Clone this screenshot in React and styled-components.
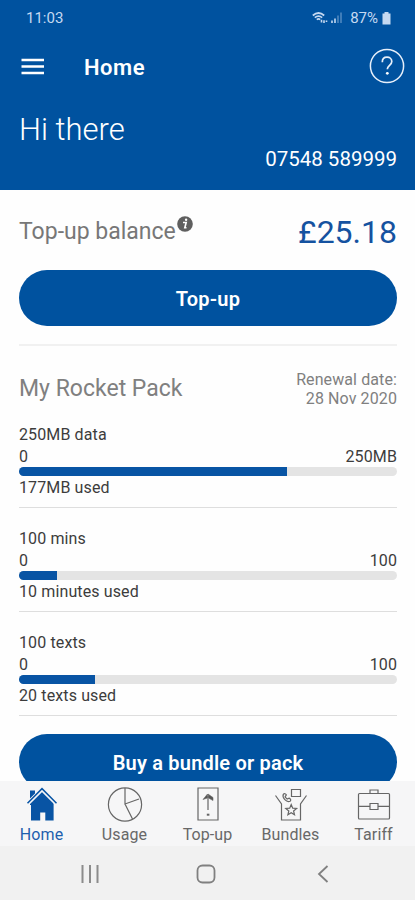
import React from "react";
import styled, { createGlobalStyle } from "styled-components";

const allowances = [
  { title: "250MB data", total: "250MB", used: 177, max: 250, label: "177MB used" },
  { title: "100 mins", total: "100", used: 10, max: 100, label: "10 minutes used" },
  { title: "100 texts", total: "100", used: 20, max: 100, label: "20 texts used" },
];

const HomeIcon = () => (
  <svg width="32" height="36" viewBox="0 0 32 36">
    <path d="M4 19V4.5h5V9l7-6.2 11.6 12V34.5h-8.3v-8h-5.1v8H5V19z" fill="#0854a4" />
    <path d="M1.6 17.6 16 3.4l14.4 14.2" fill="none" stroke="#f6f6f7" strokeWidth="4" />
    <path d="M1.5 17.2 16 2.6l14.5 14.6" fill="none" stroke="#0854a4" strokeWidth="1.5" />
  </svg>
);

const UsageIcon = () => (
  <Line width="36" height="36" viewBox="0 0 36 36">
    <circle cx="18" cy="18.5" r="16.6" />
    <path d="M18 2v16l14-5M18 18l7.5 15" />
  </Line>
);

const TopUpIcon = () => (
  <Line width="22" height="36" viewBox="0 0 22 36">
    <path d="M1 2h20v32H1z" />
    <path d="M11 24V10" />
    <path d="M6 13.5 10.5 8v4zM11 8l5 3.5v3L11.5 12z" fill="#555" strokeWidth="0.6" />
    <path d="M9.8 28.7h2.6" strokeWidth="2" />
  </Line>
);

const BundlesIcon = () => (
  <Line width="34" height="36" viewBox="0 0 34 36">
    <path d="m1.5 9.5 6 8.5v16h19V18l6-8.5" />
    <path d="M17.5 3.5h9v7h-9z" />
    <path d="M9.3 8.3c1-1.2 2.4-.4 3 .6l-1.2 2 2 2.2 2-1c1.4.6 2.3 2 1 3.2-3.6 1.6-8.2-3.5-6.8-7z" />
    <path d="m17.2 18.6 1.5 3.6 3.9.3-3 2.5.9 3.8-3.3-2-3.3 2 .9-3.8-3-2.5 3.9-.3z" />
  </Line>
);

const TariffIcon = () => (
  <Line width="34" height="36" viewBox="0 0 34 36">
    <rect x="1.5" y="7.5" width="31" height="25.5" rx="1" />
    <path d="M13 7.5V4h8v3.5M1.5 20.3H13M21 20.3h11.5M13 17.5h8v6h-8z" />
  </Line>
);

const tabs = [
  { name: "Home", icon: HomeIcon, active: true },
  { name: "Usage", icon: UsageIcon },
  { name: "Top-up", icon: TopUpIcon },
  { name: "Bundles", icon: BundlesIcon },
  { name: "Tariff", icon: TariffIcon },
];

const Allowance = ({ item }) => (
  <AllowanceBlock>
    <AllowanceTitle>{item.title}</AllowanceTitle>
    <Range>
      <span>0</span>
      <span>{item.total}</span>
    </Range>
    <Track>
      <Fill style={{ width: `${(item.used / item.max) * 100}%` }} />
    </Track>
    <Used>{item.label}</Used>
  </AllowanceBlock>
);

const App = () => {
  return (
    <Screen>
      <GlobalStyle />
      <Header>
        <StatusBar>
          <span>11:03</span>
          <StatusIcons>
            <svg width="30" height="14" viewBox="0 0 30 14" fill="none" stroke="currentColor">
              <path d="M.8 4.5Q6.5-.5 12.2 4.5M2.8 6.6q3.7-3 7.4 0M4.8 8.6q1.7-1.4 3.4 0" strokeWidth="1.7" />
              <path d="M9.5 11.5V8.8M12 12V9.3M14.5 9.5V11" strokeWidth="1.6" />
              <path d="M20 12V9.5M23 12V7.5" strokeWidth="1.6" />
              <path d="M26 12V4.5M29 12V1.5" strokeWidth="1.4" opacity=".45" />
            </svg>
            <Battery>87%</Battery>
            <svg width="9" height="13" viewBox="0 0 9 13" fill="currentColor">
              <path d="M2.5 0h4v1.500h2v11h-8v-11h2z" />
            </svg>
          </StatusIcons>
        </StatusBar>
        <TitleBar>
          <svg width="23" height="17" viewBox="0 0 23 17" stroke="#fff" strokeWidth="2.4">
            <path d="M.5 2H23M.5 8.500H23M.5 15H23" />
          </svg>
          <PageTitle>Home</PageTitle>
          <svg width="36" height="36" viewBox="0 0 36 36" fill="none" stroke="#e6effa" strokeWidth="1.5">
            <circle cx="18" cy="18" r="16.6" />
            <path d="M13.3 14.2c0-3.2 2-5 4.7-5s4.8 1.8 4.8 4.3c0 3.8-4.5 4-4.5 7.8" strokeWidth="1.7" />
            <circle cx="18.3" cy="25.3" r="1.4" fill="#fff" stroke="none" />
          </svg>
        </TitleBar>
        <Greeting>Hi there</Greeting>
        <PhoneNumber>07548 589999</PhoneNumber>
      </Header>

      <Content>
        <Balance>
          <BalanceLabel>
            Top-up balance
            <svg width="16" height="16" viewBox="0 0 16 16">
              <circle cx="8" cy="8" r="7.8" fill="#5f5f5f" />
              <path d="M6 6.5h3.2L7.8 11.8h1.7" fill="none" stroke="#fff" strokeWidth="1.6" />
              <circle cx="9.1" cy="3.8" r="1.2" fill="#fff" />
            </svg>
          </BalanceLabel>
          <Amount>£25.18</Amount>
        </Balance>
        <Button>Top-up</Button>
        <Divider />
        <PackHeader>
          <PackName>My Rocket Pack</PackName>
          <Renewal>
            Renewal date:
            <br />
            28 Nov 2020
          </Renewal>
        </PackHeader>
        {allowances.map((item) => (
          <Allowance key={item.title} item={item} />
        ))}
        <BuyButton>Buy a bundle or pack</BuyButton>
      </Content>

      <TabBar>
        {tabs.map(({ name, icon: Icon, active }) => (
          <Tab key={name} $active={active}>
            <Icon />
            <span>{name}</span>
          </Tab>
        ))}
      </TabBar>
      <SystemBar>
        <svg width="18" height="18" viewBox="0 0 18 18" stroke="#8c8c8c" strokeWidth="2">
          <path d="M1.5 0v18M9 0v18M16.5 0v18" />
        </svg>
        <svg width="20" height="20" viewBox="0 0 20 20" fill="none" stroke="#808080" strokeWidth="1.8">
          <rect x="1.5" y="1.5" width="17" height="17" rx="5" />
        </svg>
        <svg width="12" height="18" viewBox="0 0 12 18" fill="none" stroke="#808080" strokeWidth="1.8">
          <path d="M10.5 1 2 9l8.5 8" />
        </svg>
      </SystemBar>
    </Screen>
  );
};

export default App;

const GlobalStyle = createGlobalStyle`
  * {
    box-sizing: border-box;
  }

  body {
    margin: 0;
    font-family: Roboto, "Liberation Sans", sans-serif;
  }

  svg {
    display: block;
    flex-shrink: 0;
  }
`;

const Screen = styled.div`
  display: flex;
  flex-direction: column;
  width: 415px;
  height: 900px;
  overflow: hidden;
  background: #fefefe;
`;

const Header = styled.header`
  height: 190px;
  flex-shrink: 0;
  background: #00529f;
  color: #fff;
`;

const StatusBar = styled.div`
  display: flex;
  justify-content: space-between;
  align-items: center;
  height: 36px;
  padding: 0 24px 0 26px;
  color: #c5d9f1;
  font-size: 15px;
`;

const StatusIcons = styled.div`
  display: flex;
  align-items: center;
`;

const Battery = styled.span`
  margin: 0 4px 0 8px;
  font-size: 15px;
`;

const TitleBar = styled.div`
  display: flex;
  align-items: center;
  height: 60px;
  padding: 0 10px 0 21px;
`;

const PageTitle = styled.h1`
  flex: 1;
  margin: 2px 0 0 40px;
  font-size: 22px;
  font-weight: 600;
  letter-spacing: 0.5px;
`;

const Greeting = styled.div`
  padding-left: 19px;
  margin-top: 14px;
  font-size: 31px;
  font-weight: 300;
  line-height: 40px;
`;

const PhoneNumber = styled.div`
  padding-right: 18px;
  margin-top: -1px;
  font-size: 20.5px;
  line-height: 20px;
  text-align: right;
`;

const Content = styled.main`
  flex: 1;
  min-height: 0;
  overflow: hidden;
  padding: 0 18px 0 19px;
`;

const Balance = styled.div`
  display: flex;
  justify-content: space-between;
  height: 80px;
  padding-top: 22px;
`;

const BalanceLabel = styled.div`
  display: flex;
  color: #777;
  font-size: 23px;
  line-height: 40px;

  svg {
    margin: 4px 0 0 1px;
  }
`;

const Amount = styled.div`
  color: #1552a0;
  font-size: 32px;
  line-height: 40px;
`;

const Button = styled.button`
  display: block;
  width: 100%;
  height: 56px;
  padding: 2px 0 0;
  border: 0;
  border-radius: 28px;
  background: #00529f;
  color: #fff;
  font: 600 20px Roboto, "Liberation Sans", sans-serif;
  letter-spacing: 0.2px;
`;

const BuyButton = styled(Button)`
  margin-top: 18px;
`;

const Divider = styled.div`
  height: 2px;
  margin-top: 18px;
  background: #f1f1f1;
`;

const PackHeader = styled.div`
  display: flex;
  justify-content: space-between;
  height: 66px;
  padding-top: 24px;
  color: #808080;
`;

const PackName = styled.h2`
  margin: 4px 0 0;
  font-size: 23px;
  font-weight: 400;
  line-height: 30px;
`;

const Renewal = styled.div`
  font-size: 16px;
  line-height: 19px;
  letter-spacing: 0.1px;
  text-align: right;
`;

const AllowanceBlock = styled.section`
  height: 96px;
  padding-top: 12px;
  border-bottom: 1px solid #dedede;
  color: #3c3c3c;
  font-size: 16px;
  letter-spacing: 0.12px;

  & + & {
    height: 104px;
    padding-top: 20px;
  }
`;

const AllowanceTitle = styled.div`
  line-height: 22px;
`;

const Range = styled.div`
  display: flex;
  justify-content: space-between;
  line-height: 22px;
`;

const Track = styled.div`
  height: 9px;
  margin-top: -1px;
  overflow: hidden;
  border-radius: 5px;
  background: #e4e4e4;
`;

const Fill = styled.div`
  height: 100%;
  background: #0854a4;
`;

const Used = styled.div`
  line-height: 24px;
`;

const TabBar = styled.nav`
  display: flex;
  height: 65px;
  flex-shrink: 0;
  background: #f6f6f7;
`;

const Tab = styled.div`
  display: flex;
  flex: 1;
  flex-direction: column;
  align-items: center;
  padding-top: 5px;
  color: ${({ $active }) => ($active ? "#1e5fae" : "#686868")};
  font-size: 16px;
  letter-spacing: 0.1px;

  span {
    margin-top: 3px;
    line-height: 20px;
  }
`;

const Line = styled.svg`
  fill: none;
  stroke: #666;
  stroke-width: 1.2;
`;

const SystemBar = styled.div`
  display: flex;
  justify-content: space-between;
  align-items: center;
  height: 54px;
  flex-shrink: 0;
  padding: 1px 86px 0 81px;
  background: #f1f1f1;

  svg:nth-child(2) {
    margin-right: 4px;
  }
`;
